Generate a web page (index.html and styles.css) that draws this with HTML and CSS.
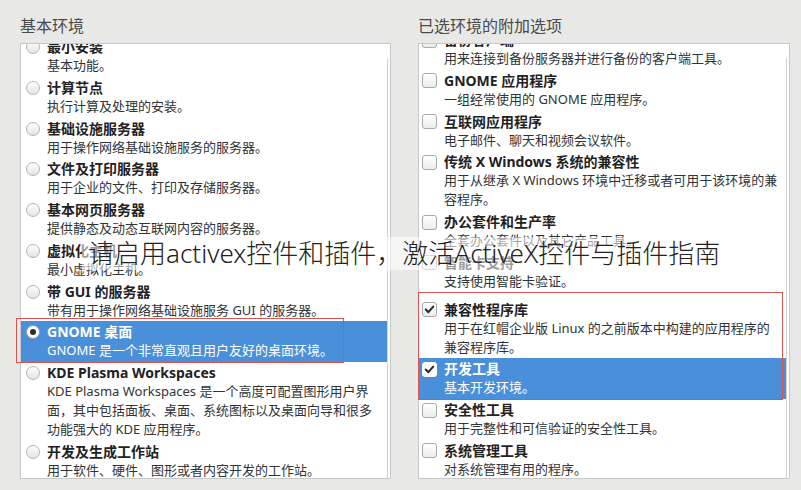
FILE: index.html
```html
<!DOCTYPE html>
<html lang="zh-CN">
<head>
<meta charset="utf-8">
<title>软件选择</title>
<link rel="stylesheet" href="styles.css">
</head>
<body>
<div class="page">
  <section class="column">
    <h2 class="col-title">基本环境</h2>
    <div class="panel">
      <div class="list list-left">
        <div class="item"><span class="radio"></span><div class="title">最小安装</div><div class="desc">基本功能。</div></div>
        <div class="item"><span class="radio"></span><div class="title">计算节点</div><div class="desc">执行计算及处理的安装。</div></div>
        <div class="item"><span class="radio"></span><div class="title">基础设施服务器</div><div class="desc">用于操作网络基础设施服务的服务器。</div></div>
        <div class="item"><span class="radio"></span><div class="title">文件及打印服务器</div><div class="desc">用于企业的文件、打印及存储服务器。</div></div>
        <div class="item"><span class="radio"></span><div class="title">基本网页服务器</div><div class="desc">提供静态及动态互联网内容的服务器。</div></div>
        <div class="item"><span class="radio"></span><div class="title">虚拟化主机</div><div class="desc">最小虚拟化主机。</div></div>
        <div class="item"><span class="radio"></span><div class="title">带 GUI 的服务器</div><div class="desc">带有用于操作网络基础设施服务 GUI 的服务器。</div></div>
        <div class="item selected"><span class="radio on"></span><div class="title">GNOME 桌面</div><div class="desc">GNOME 是一个非常直观且用户友好的桌面环境。</div></div>
        <div class="item"><span class="radio"></span><div class="title">KDE Plasma Workspaces</div><div class="desc">KDE Plasma Workspaces 是一个高度可配置图形用户界<br>面，其中包括面板、桌面、系统图标以及桌面向导和很多<br>功能强大的 KDE 应用程序。</div></div>
        <div class="item"><span class="radio"></span><div class="title">开发及生成工作站</div><div class="desc">用于软件、硬件、图形或者内容开发的工作站。</div></div>
      </div>
      <div class="track"></div>
    </div>
  </section>
  <section class="column">
    <h2 class="col-title">已选环境的附加选项</h2>
    <div class="panel">
      <div class="list list-right">
        <div class="item ck"><span class="box"></span><div class="title">备份客户端</div><div class="desc">用来连接到备份服务器并进行备份的客户端工具。</div></div>
        <div class="item ck"><span class="box"></span><div class="title">GNOME 应用程序</div><div class="desc">一组经常使用的 GNOME 应用程序。</div></div>
        <div class="item ck"><span class="box"></span><div class="title">互联网应用程序</div><div class="desc">电子邮件、聊天和视频会议软件。</div></div>
        <div class="item ck"><span class="box"></span><div class="title">传统 X Windows 系统的兼容性</div><div class="desc">用于从继承 X Windows 环境中迁移或者可用于该环境的兼<br>容程序。</div></div>
        <div class="item ck"><span class="box"></span><div class="title">办公套件和生产率</div><div class="desc">全套办公套件以及其它产品工具。</div></div>
        <div class="item ck"><span class="box"></span><div class="title">智能卡支持</div><div class="desc">支持使用智能卡验证。</div></div>
        <div class="item ck spaced"><span class="box"><svg viewBox="0 0 15 15" class="tick"><path d="M3.2 7.6 L6.2 10.6 L11.8 4.2" /></svg></span><div class="title">兼容性程序库</div><div class="desc">用于在红帽企业版 Linux 的之前版本中构建的应用程序的<br>兼容程序库。</div></div>
        <div class="item ck selected"><span class="box"><svg viewBox="0 0 15 15" class="tick"><path d="M3.2 7.6 L6.2 10.6 L11.8 4.2" /></svg></span><div class="title">开发工具</div><div class="desc">基本开发环境。</div></div>
        <div class="item ck"><span class="box"></span><div class="title">安全性工具</div><div class="desc">用于完整性和可信验证的安全性工具。</div></div>
        <div class="item ck"><span class="box"></span><div class="title">系统管理工具</div><div class="desc">对系统管理有用的程序。</div></div>
      </div>
      <div class="track"></div>
    </div>
  </section>

  <div class="mark mark-left"></div>
  <div class="mark mark-right"></div>
  <div class="caption">请启用activex控件和插件，激活ActiveX控件与插件指南</div>
</div>
</body>
</html>
```

FILE: styles.css
```css
html, body {
  margin: 0;
  padding: 0;
}
body {
  background: #e8e8e6;
  font-family: "Noto Sans", "Noto Sans CJK SC", sans-serif;
  color: #2e3436;
}
.page {
  position: relative;
  width: 801px;
  height: 490px;
  box-sizing: border-box;
  padding: 14px 11px 0 20px;
  display: grid;
  grid-template-columns: 371px 372px;
  column-gap: 27px;
  overflow: hidden;
}
.col-title {
  margin: 0 0 5px 0;
  font-size: 16px;
  font-weight: 400;
  line-height: 24px;
  color: #4a4a4a;
}
.panel {
  height: 436px;
  box-sizing: border-box;
  background: #ffffff;
  border: 1px solid #c8c8c6;
  display: flex;
  overflow: hidden;
}
.list {
  flex: 1;
  min-width: 0;
}
.list-left { margin-top: -8px; }
.list-right { margin-top: -15px; }
.track {
  width: 2px;
  margin-top: 14px;
  border-left: 1px solid #d2d2d0;
}
.item {
  display: grid;
  grid-template-columns: 14px 1fr;
  column-gap: 7px;
  padding: 2px 0 1.75px 5px;
}
.item.ck {
  grid-template-columns: 15px 1fr;
  column-gap: 7px;
  padding-left: 3px;
}
.item.spaced { margin-top: 6px; }
.title {
  grid-column: 2;
  grid-row: 1;
  font-size: 14px;
  font-weight: 700;
  line-height: 18px;
  color: #1f2223;
  white-space: nowrap;
}
.desc {
  grid-column: 2;
  grid-row: 2;
  font-size: 13px;
  line-height: 19px;
  color: #303436;
  white-space: nowrap;
}
.radio, .box {
  grid-column: 1;
  grid-row: 1;
  align-self: center;
  box-sizing: border-box;
  width: 14px;
  height: 14px;
  border: 1px solid #b4b4b2;
  background: linear-gradient(#ffffff, #e4e4e2);
  display: flex;
  align-items: center;
  justify-content: center;
}
.radio { border-radius: 50%; }
.box {
  width: 15px;
  height: 15px;
  border-radius: 3px;
  border-color: #a9a9a7;
  background: linear-gradient(#ffffff, #ececea);
}
.radio.on {
  background: #ffffff;
  border-color: #9a9a98;
}
.radio.on::after {
  content: "";
  width: 6px;
  height: 6px;
  border-radius: 50%;
  background: #2e2e2e;
}
.tick {
  width: 15px;
  height: 15px;
}
.tick path {
  fill: none;
  stroke: #2a2d2e;
  stroke-width: 2.4;
  stroke-linecap: round;
  stroke-linejoin: round;
}
.item.selected {
  background: #4a8fd9;
}
.item.selected .title,
.item.selected .desc {
  color: #ffffff;
}
.item.selected .box {
  background: #ffffff;
  border-color: #ffffff;
}

/* annotation rectangles */
.mark {
  position: absolute;
  border: 1px solid #d9534f;
  box-sizing: border-box;
}
.mark-left {
  left: 16px;
  top: 318px;
  width: 328px;
  height: 45px;
}
.mark-right {
  left: 418px;
  top: 292px;
  width: 365px;
  height: 108px;
}

/* caption over the screenshot */
.caption {
  position: absolute;
  left: 82px;
  top: 237px;
  padding: 0 6px;
  line-height: 33px;
  font-size: 26px;
  font-weight: 300;
  color: #222222;
  background: rgba(255, 255, 255, 0.55);
  white-space: nowrap;
  font-family: "Noto Sans", "Noto Sans CJK SC", sans-serif;
}
```
